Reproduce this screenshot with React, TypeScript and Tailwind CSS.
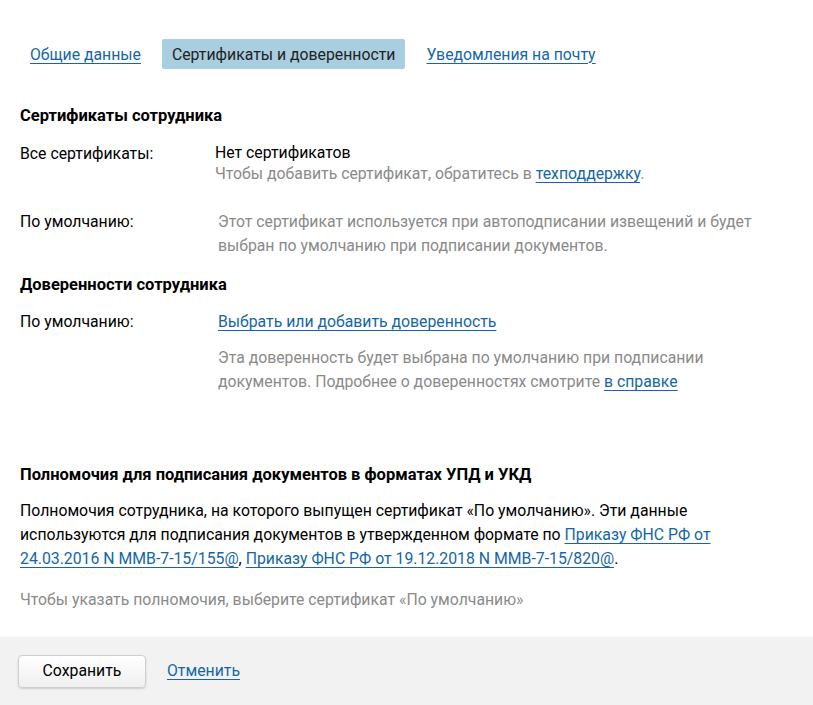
import React from "react";

const link = "text-[#1466a8] underline underline-offset-[3px] decoration-1";

function Row({ label, children }: { label: string; children: React.ReactNode }) {
  return (
    <div className="flex">
      <div className="w-[195px] shrink-0 text-black">{label}</div>
      <div className="flex-1">{children}</div>
    </div>
  );
}

export default function App() {
  return (
    <div className="flex min-h-[705px] flex-col bg-white font-['Roboto',sans-serif] text-[15.8px] leading-[24px] text-[#222]">
      <div className="flex-1 px-5">
        <nav className="mt-[39px] flex gap-[11px]">
          <a href="#" className={`flex h-[30px] items-center px-[10px] pt-[1px] ${link}`}>
            Общие данные
          </a>
          <span className="flex h-[30px] items-center rounded-[2px] bg-[#a8cedf] px-[10px] pt-[1px] text-[#222]">
            Сертификаты и доверенности
          </span>
          <a href="#" className={`flex h-[30px] items-center px-[10px] pt-[1px] ${link}`}>
            Уведомления на почту
          </a>
        </nav>

        <section className="mt-[35px]">
          <h2 className="text-[16.5px] font-bold text-black">Сертификаты сотрудника</h2>
          <div className="mt-[14px]">
            <Row label="Все сертификаты:">
              <div className="leading-[21px] text-black">Нет сертификатов</div>
              <div className="leading-[21px] text-[#8a8a8a]">
                Чтобы добавить сертификат, обратитесь в{" "}
                <a href="#" className={link}>
                  техподдержку
                </a>
                .
              </div>
            </Row>
          </div>
          <div className="mt-[26px]">
            <Row label="По умолчанию:">
              <p className="pl-[3px] text-[#8a8a8a]">
                Этот сертификат используется при автоподписании извещений и будет
                <br />
                выбран по умолчанию при подписании документов.
              </p>
            </Row>
          </div>
        </section>

        <section className="mt-[15px]">
          <h2 className="text-[16.5px] font-bold text-black">Доверенности сотрудника</h2>
          <div className="mt-[13px]">
            <Row label="По умолчанию:">
              <div className="pl-[3px]">
                <a href="#" className={link}>
                  Выбрать или добавить доверенность
                </a>
                <p className="mt-[12px] text-[#8a8a8a]">
                  Эта доверенность будет выбрана по умолчанию при подписании
                  <br />
                  документов. Подробнее о доверенностях смотрите{" "}
                  <a href="#" className={link}>
                    в справке
                  </a>
                </p>
              </div>
            </Row>
          </div>
        </section>

        <section className="mt-[69px]">
          <h2 className="text-[16.5px] font-bold text-black">Полномочия для подписания документов в форматах УПД и УКД</h2>
          <p className="mt-[12px] text-black">
            Полномочия сотрудника, на которого выпущен сертификат «По умолчанию». Эти данные
            <br />
            используются для подписания документов в утвержденном формате по{" "}
            <a href="#" className={link}>
              Приказу ФНС РФ от
              <br />
              24.03.2016 N ММВ-7-15/155@
            </a>
            ,{" "}
            <a href="#" className={link}>
              Приказу ФНС РФ от 19.12.2018 N ММВ-7-15/820@
            </a>
            .
          </p>
          <p className="mt-[17px] text-[#8a8a8a]">Чтобы указать полномочия, выберите сертификат «По умолчанию»</p>
        </section>
      </div>

      <footer className="mt-[25px] flex h-[68px] items-center gap-[21px] bg-[#f2f2f2] px-[18px]">
        <button className="h-[33px] w-[128px] rounded-[4px] border border-[#cfcfcf] bg-gradient-to-b from-white to-[#efefef] text-black shadow-[0_1px_2px_rgba(0,0,0,0.15)]">
          Сохранить
        </button>
        <a href="#" className={link}>
          Отменить
        </a>
      </footer>
    </div>
  );
}
